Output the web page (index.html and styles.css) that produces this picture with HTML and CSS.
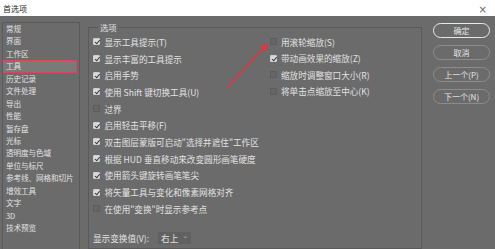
FILE: index.html
```html
<!DOCTYPE html>
<html lang="zh">
<head>
<meta charset="utf-8">
<title>首选项</title>
<link rel="stylesheet" href="styles.css">
</head>
<body>
<div class="titlebar"><span>首选项</span><span class="close">×</span></div>
<div class="content">
  <ul class="sidebar">
    <li>常规</li>
    <li>界面</li>
    <li>工作区</li>
    <li class="sel">工具</li>
    <li>历史记录</li>
    <li>文件处理</li>
    <li>导出</li>
    <li>性能</li>
    <li>暂存盘</li>
    <li>光标</li>
    <li>透明度与色域</li>
    <li>单位与标尺</li>
    <li>参考线、网格和切片</li>
    <li>增效工具</li>
    <li>文字</li>
    <li>3D</li>
    <li>技术预览</li>
  </ul>
  <fieldset class="group">
    <legend>选项</legend>
    <div class="cols">
      <div class="col left">
        <div class="row"><span class="cb on"></span>显示工具提示(T)</div>
        <div class="row"><span class="cb on"></span>显示丰富的工具提示</div>
        <div class="row"><span class="cb on"></span>启用手势</div>
        <div class="row"><span class="cb on"></span>使用 Shift 键切换工具(U)</div>
        <div class="row"><span class="cb"></span>过界</div>
        <div class="row"><span class="cb on"></span>启用轻击平移(F)</div>
        <div class="row"><span class="cb on"></span>双击图层蒙版可启动"选择并遮住"工作区</div>
        <div class="row"><span class="cb on"></span>根据 HUD 垂直移动来改变圆形画笔硬度</div>
        <div class="row"><span class="cb on"></span>使用箭头键旋转画笔笔尖</div>
        <div class="row"><span class="cb on"></span>将矢量工具与变化和像素网格对齐</div>
        <div class="row"><span class="cb"></span>在使用"变换"时显示参考点</div>
        <div class="row select-row">显示变换值(V):<span class="select">右上<span class="chev">⌄</span></span></div>
      </div>
      <div class="col right">
        <div class="row"><span class="cb"></span>用滚轮缩放(S)</div>
        <div class="row"><span class="cb on"></span>带动画效果的缩放(Z)</div>
        <div class="row"><span class="cb"></span>缩放时调整窗口大小(R)</div>
        <div class="row"><span class="cb"></span>将单击点缩放至中心(K)</div>
      </div>
    </div>
  </fieldset>
  <div class="buttons">
    <div class="btn primary">确定</div>
    <div class="btn">取消</div>
    <div class="btn">上一个(P)</div>
    <div class="btn">下一个(N)</div>
  </div>
</div>
<svg class="arrow" width="495" height="249" viewBox="0 0 495 249">
  <line x1="227" y1="87" x2="263" y2="48" stroke="#e4343f" stroke-width="1.6"/>
  <polygon points="268,43 265.5,51.5 259.6,46" fill="#e4343f"/>
</svg>
</body>
</html>
```
FILE: styles.css
```css
html, body {
  margin: 0;
  padding: 0;
}
body {
  width: 495px;
  height: 249px;
  overflow: hidden;
  background: #6b6b6b;
  color: #e2e2e2;
  font-family: "Noto Sans CJK SC", "Noto Sans", sans-serif;
  font-size: 8.6px;
  position: relative;
}
.titlebar {
  height: 16px;
  background: #ffffff;
  display: flex;
  justify-content: space-between;
  align-items: center;
  padding: 0 8px 0 3px;
  color: #2a2a2a;
  font-size: 8px;
  box-sizing: border-box;
}
.titlebar .close {
  color: #666;
  font-size: 10px;
  font-family: "DejaVu Sans", sans-serif;
  padding-top: 3px;
}
.content {
  display: flex;
  align-items: stretch;
  padding-top: 6px;
  height: 233px;
  box-sizing: border-box;
}
.sidebar {
  list-style: none;
  margin: 0 0 0 2px;
  padding: 0;
  width: 78px;
  box-sizing: border-box;
  border: 1px solid #5a5a5a;
  border-bottom: none;
  flex: none;
  overflow: hidden;
}
.sidebar li {
  height: 12.44px;
  line-height: 12.44px;
  padding-left: 3px;
  font-size: 7.6px;
  white-space: nowrap;
  letter-spacing: -0.1px;
}
.sidebar li.sel {
  margin-left: -3px;
  width: 77px;
  padding-left: 5px;
  box-sizing: border-box;
  border: 1px solid #d24a57;
  background: #7a7a7a;
  line-height: 10.44px;
}
.group {
  margin: 0 0 0 8px;
  padding: 0;
  width: 334px;
  box-sizing: border-box;
  border: 1px solid #5a5a5a;
  flex: none;
  min-width: 0;
}
.group legend {
  margin-left: 9px;
  padding: 0 2px;
  line-height: 10px;
  font-size: 8.3px;
}
.cols {
  display: flex;
  padding: 1.5px 0 0 4px;
}
.col.left {
  width: 177px;
  flex: none;
}
.row {
  display: flex;
  align-items: center;
  gap: 4.5px;
  height: 16.7px;
  white-space: nowrap;
}
.col.right .row {
  height: 16.5px;
  gap: 4px;
}
.cb {
  width: 7px;
  height: 7px;
  box-sizing: border-box;
  border: 1px solid #5c5c5c;
  background: #666666;
  border-radius: 1px;
  flex: none;
  position: relative;
}
.cb.on {
  background: #d9d9d9;
  border-color: #cfcfcf;
}
.cb.on::after {
  content: "";
  position: absolute;
  left: 1.5px;
  top: 0px;
  width: 2px;
  height: 3.5px;
  border-right: 1.3px solid #3a3a3a;
  border-bottom: 1.3px solid #3a3a3a;
  transform: rotate(40deg);
}
.select-row {
  margin-top: 12.8px;
  gap: 9px;
}
.select {
  display: inline-flex;
  align-items: center;
  justify-content: space-between;
  width: 33px;
  height: 12px;
  box-sizing: border-box;
  padding: 0 3px;
  background: #616161;
  border-radius: 1px;
}
.chev {
  color: #a8a8a8;
  font-family: "DejaVu Sans", sans-serif;
  font-size: 7px;
  line-height: 7px;
  margin-top: -3px;
}
.buttons {
  margin: 1px 0 0 11px;
  display: flex;
  flex-direction: column;
  align-self: flex-start;
  gap: 7px;
  width: 57px;
  flex: none;
}
.btn {
  height: 15px;
  box-sizing: border-box;
  border: 1px solid #8c8c8c;
  border-radius: 8px;
  display: flex;
  align-items: center;
  justify-content: center;
  font-size: 8px;
  color: #e6e6e6;
}
.btn.primary {
  border-color: #e8e8e8;
}
.arrow {
  position: absolute;
  left: 0;
  top: 0;
  pointer-events: none;
}
```
